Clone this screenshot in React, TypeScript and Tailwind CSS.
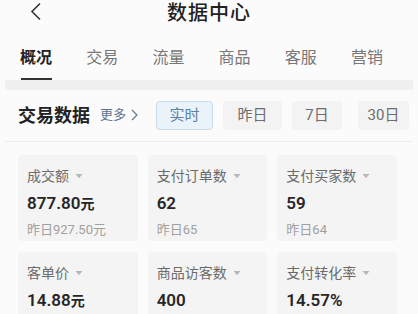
import React from 'react';

type Metric = {
  label: string;
  value: string;
  unit?: string;
  prev?: string;
};

const TABS = ['概况', '交易', '流量', '商品', '客服', '营销'];

const METRICS: Metric[] = [
  { label: '成交额', value: '877.80', unit: '元', prev: '昨日927.50元' },
  { label: '支付订单数', value: '62', prev: '昨日65' },
  { label: '支付买家数', value: '59', prev: '昨日64' },
  { label: '客单价', value: '14.88', unit: '元', prev: '昨日14.26元' },
  { label: '商品访客数', value: '400', prev: '昨日421' },
  { label: '支付转化率', value: '14.57%', prev: '昨日15.44%' },
];

const FONT = "font-['Roboto','Noto_Sans_CJK_SC',sans-serif]";

function Caret() {
  return (
    <svg className="ml-[6px] w-[8px] h-[6px] text-[#b8b8b8]" viewBox="0 0 8 6" fill="currentColor">
      <path d="M0.5 1h7L4 5.2z" />
    </svg>
  );
}

function MetricCard({ m }: { m: Metric }) {
  return (
    <div className="h-[86px] rounded-[4px] bg-[#f4f4f4] px-[9px] pt-[11px]">
      <div className="flex items-center h-[20px] text-[14px] text-[#6b6b6b]">
        {m.label}
        <Caret />
      </div>
      <div className="mt-[5px] h-[24px] leading-[24px] text-[#262626] font-semibold">
        <span className="text-[17px]">{m.value}</span>
        {m.unit && <span className="text-[14px]">{m.unit}</span>}
      </div>
      {m.prev && (
        <div className="mt-[6px] h-[18px] leading-[18px] text-[13px] text-[#a0a0a0]">{m.prev}</div>
      )}
    </div>
  );
}

export default function App() {
  return (
    <div className={`w-[418px] h-[314px] overflow-hidden bg-[#fbfbfb] ${FONT}`}>
      {/* Top bar */}
      <div className="relative h-[26px] flex items-center justify-center">
        <svg
          className="absolute left-[29px] top-[2px] w-[14px] h-[19px] text-[#333]"
          viewBox="0 0 14 19"
          fill="none"
          stroke="currentColor"
          strokeWidth="1.6"
        >
          <polyline points="11,1.5 3,9.5 11,17.5" />
        </svg>
        <span className="text-[20px] font-medium text-[#222] tracking-[1px]">数据中心</span>
      </div>

      {/* Tabs */}
      <div className="mt-[14px] h-[40px] pl-[20px] pr-[35px] flex justify-between">
        {TABS.map((t, i) => (
          <div key={t} className="relative flex flex-col items-center pt-[6px]">
            <span className={i === 0 ? 'text-[16px] font-bold text-[#222]' : 'text-[16px] text-[#777]'}>{t}</span>
            {i === 0 && <div className="absolute bottom-[0px] w-[31px] h-[2px] bg-[#333]" />}
          </div>
        ))}
      </div>

      {/* Grey band */}
      <div className="mx-[5px] h-[10px] bg-[#f0f0f0]" />

      {/* Section header */}
      <div className="mt-[10px] h-[30px] pl-[18px] pr-[9px] flex items-center">
        <span className="text-[18px] font-bold text-[#222]">交易数据</span>
        <span className="ml-[10px] flex items-center text-[13px] text-[#5f7391]">
          更多
          <svg className="ml-[5px] w-[7px] h-[12px]" viewBox="0 0 7 12" fill="none" stroke="currentColor" strokeWidth="1.1">
            <polyline points="1,1 6,6 1,11" />
          </svg>
        </span>
        <div className="ml-auto flex">
          <div className="h-[29px] w-[57px] flex items-center justify-center rounded-[4px] border border-[#c9dbe8] bg-[#eaf3fa] text-[15px] text-[#5c7fa0]">
            实时
          </div>
          <div className="ml-[10px] h-[29px] w-[59px] flex items-center justify-center rounded-[4px] bg-[#f3f3f3] text-[15px] text-[#6e6e6e]">
            昨日
          </div>
          <div className="ml-[10px] h-[29px] w-[50px] flex items-center justify-center rounded-[4px] bg-[#f3f3f3] text-[15px] text-[#6e6e6e]">
            7日
          </div>
          <div className="ml-[16px] h-[29px] w-[51px] flex items-center justify-center rounded-[4px] bg-[#f3f3f3] text-[15px] text-[#6e6e6e]">
            30日
          </div>
        </div>
      </div>

      {/* Divider */}
      <div className="mt-[11px] mx-[5px] h-px bg-[#ececec]" />

      {/* Metrics */}
      <div className="mt-[13px] pl-[18px] pr-[21px] grid grid-cols-3 gap-x-[10px] gap-y-[11px]">
        {METRICS.map((m) => (
          <MetricCard key={m.label} m={m} />
        ))}
      </div>
    </div>
  );
}
